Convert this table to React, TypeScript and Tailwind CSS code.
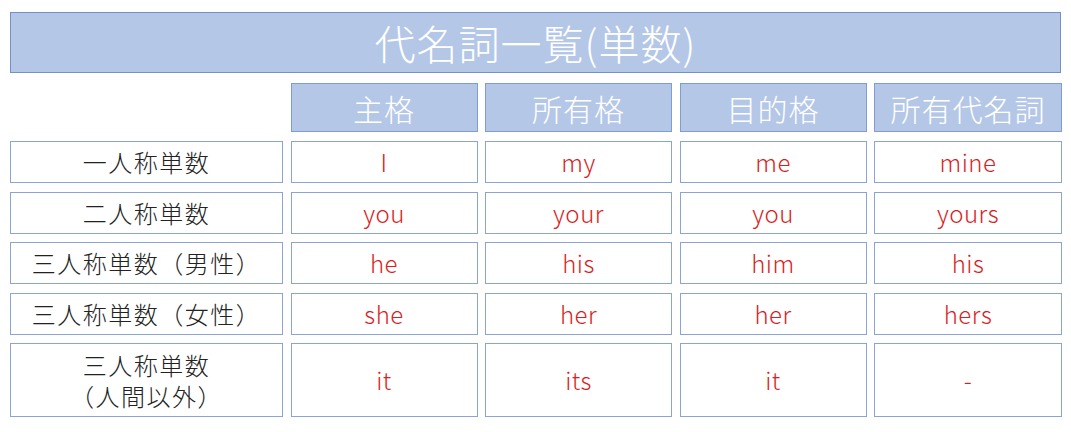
const headers = ["主格", "所有格", "目的格", "所有代名詞"]

const rows: { label: React.ReactNode; tall?: boolean; cells: string[] }[] = [
  { label: "一人称単数", cells: ["I", "my", "me", "mine"] },
  { label: "二人称単数", cells: ["you", "your", "you", "yours"] },
  { label: "三人称単数（男性）", cells: ["he", "his", "him", "his"] },
  { label: "三人称単数（女性）", cells: ["she", "her", "her", "hers"] },
  {
    label: (
      <>
        <span>三人称単数</span>
        <span>（人間以外）</span>
      </>
    ),
    tall: true,
    cells: ["it", "its", "it", "-"],
  },
]

export default function App() {
  return (
    <div
      className="w-[1071px] h-[432px] bg-white pt-[12px] px-[10px] font-light"
      style={{ fontFamily: '"Noto Sans CJK JP Light", "Noto Sans CJK JP DemiLight", "Noto Sans CJK JP", "Noto Sans", sans-serif' }}
    >
      {/* title */}
      <div className="h-[61px] w-[1051px] bg-[#b4c7e7] border border-[#7391c8] flex items-center justify-center text-white text-[41px] tracking-[1px] leading-none">
        代名詞一覧(単数)
      </div>

      <div className="mt-[10px] grid grid-cols-[273px_187px_187px_187px_188px] gap-x-[7.5px]">
        {/* header row */}
        <div className="h-[49px]" />
        {headers.map((h) => (
          <div
            key={h}
            className="h-[49px] bg-[#b4c7e7] border border-[#7f9dd0] flex items-center justify-center text-white text-[30px] tracking-[1px] leading-none"
          >
            {h}
          </div>
        ))}
      </div>

      <div className="mt-[9px] flex flex-col gap-y-[8.5px]">
        {rows.map((r, i) => (
          <div key={i} className="grid grid-cols-[273px_187px_187px_187px_188px] gap-x-[7.5px]">
            <div
              className={`${r.tall ? "h-[74px] leading-[31px]" : "h-[42px] leading-none"} border border-[#8ba5d3] flex flex-col items-center justify-center text-[#222] text-[24px] tracking-[1.5px]`}
            >
              {r.label}
            </div>
            {r.cells.map((c, j) => (
              <div
                key={j}
                className={`${r.tall ? "h-[74px]" : "h-[42px]"} border border-[#8ba5d3] flex items-center justify-center text-[#d81e23] text-[24px] tracking-[0.5px] leading-none`}
              >
                {c}
              </div>
            ))}
          </div>
        ))}
      </div>
    </div>
  )
}
